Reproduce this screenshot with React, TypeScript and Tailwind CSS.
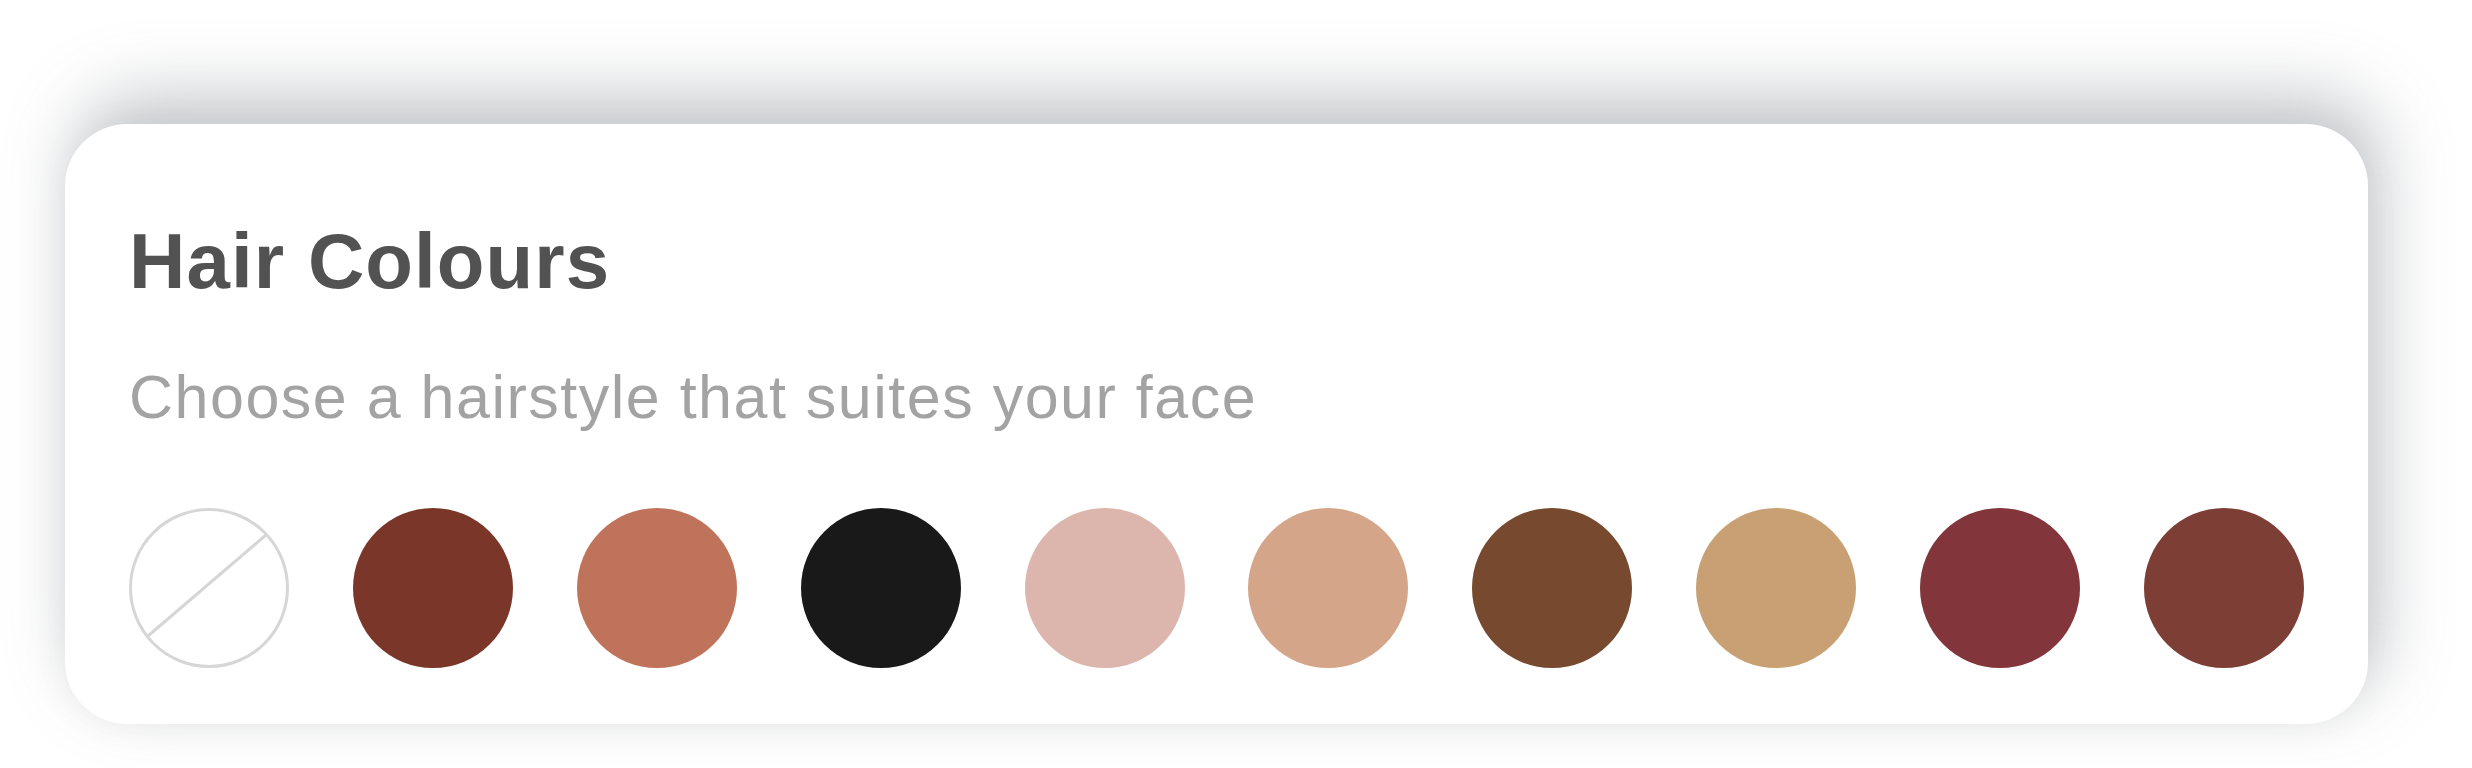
import React from "react";

const swatches = [
  "#7a3628",
  "#c0735b",
  "#191919",
  "#dcb6ad",
  "#d4a588",
  "#774a30",
  "#c8a074",
  "#82353a",
  "#7d3e35",
];

const NoColour = () => (
  <svg width="160" height="160" viewBox="0 0 160 160" className="shrink-0">
    <circle cx="80" cy="80" r="78.5" fill="none" stroke="#d6d6d6" strokeWidth="3" />
    <line x1="137" y1="27" x2="19" y2="128" stroke="#d6d6d6" strokeWidth="3" />
  </svg>
);

export default function App() {
  return (
    <div className="w-full h-[768px] bg-white pl-[65px] pt-[124px] overflow-hidden">
      <div className="w-[2303px] h-[600px] bg-white rounded-[62px] px-[64px] pt-[98px] shadow-[12px_-28px_70px_rgba(90,95,105,0.35),0_0_40px_rgba(0,0,0,0.04)] font-['Liberation_Sans',Arial,sans-serif]">
        {/* Title */}
        <h2 className="text-[78px] leading-none font-bold text-[#525252] tracking-[1.1px]">Hair Colours</h2>

        {/* Subtitle */}
        <p className="mt-[67px] text-[61px] leading-none text-[#a3a3a3] tracking-[1.5px]">
          Choose a hairstyle that suites your face
        </p>

        {/* Swatches */}
        <div className="mt-[80px] flex justify-between">
          <NoColour />
          {swatches.map((c) => (
            <div
              key={c}
              className="w-[160px] h-[160px] rounded-full shrink-0"
              style={{ backgroundColor: c }}
            />
          ))}
        </div>
      </div>
    </div>
  );
}
